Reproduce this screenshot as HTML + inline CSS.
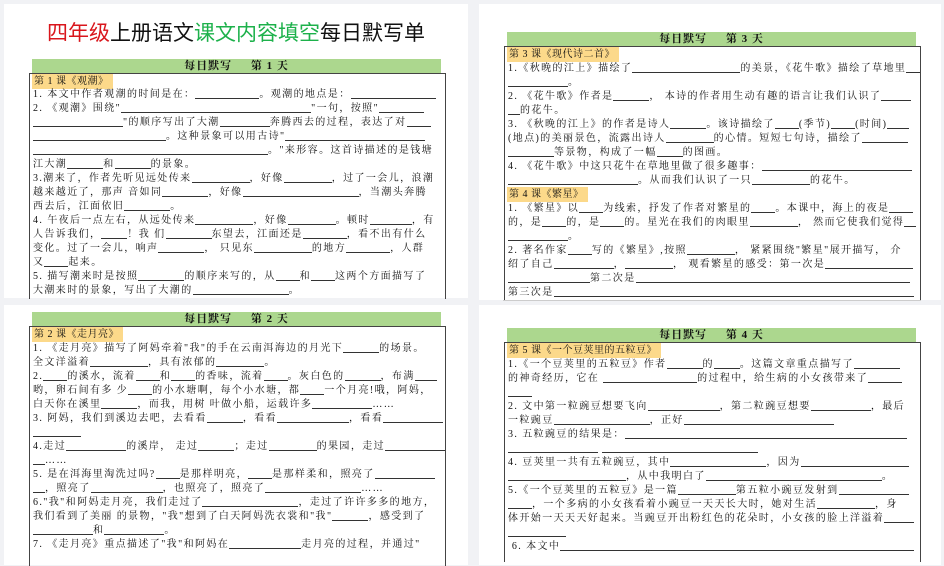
<!DOCTYPE html>
<html><head><meta charset="utf-8"><style>
*{margin:0;padding:0;box-sizing:border-box}
body{width:944px;height:557px;background:#f1f2f5;position:relative;overflow:hidden;font-family:"Liberation Serif","Noto Serif CJK SC","Noto Sans CJK SC",serif;color:#111}
.pg{position:absolute;background:#fff}
.hd{position:absolute;height:14px;background:#acd78e;font-size:11px;line-height:14px;text-align:center;font-weight:bold;letter-spacing:1px}
.bx{position:absolute;border:1px solid #444;border-bottom:none;overflow:hidden}
.ln{position:absolute;left:3px;white-space:nowrap;font-size:10px;line-height:14px;height:14px;letter-spacing:1.4px}
.tag{background:#fcd98a;padding:0 4px 0 2px;display:inline-block;line-height:15px;letter-spacing:0.5px}
.u{display:inline-block;border-bottom:1px solid #333;height:11px;vertical-align:-2px}
.t{position:absolute;left:0;width:472px;top:21px;text-align:center;font-family:"Liberation Sans","Noto Sans CJK SC",sans-serif;font-size:21px;line-height:26px;letter-spacing:0}
</style></head><body>
<div class="pg" style="left:4px;top:4px;width:464px;height:294px"></div>
<div class="pg" style="left:479px;top:4px;width:462px;height:296px"></div>
<div class="pg" style="left:4px;top:305px;width:464px;height:260px"></div>
<div class="pg" style="left:479px;top:305px;width:462px;height:260px"></div>
<div style="position:absolute;left:503px;top:300px;width:418px;height:1px;background:#ccc"></div>

<div class="t"><span style="color:#d9161c">四年级</span>上册语文<span style="color:#1db14b">课文内容填空</span>每日默写单</div>

<!-- Day 1 -->
<div class="hd" style="left:32px;top:59px;width:409px">每日默写&nbsp;&nbsp;&nbsp;&nbsp;&nbsp;第 1 天</div>
<div class="bx" style="left:29px;top:73px;width:417px;height:226px">
<div class="ln" style="top:0;left:2px"><span class="tag">第 1 课《观潮》</span></div>
<div class="ln" style="top:14px">1. 本文中作者观潮的时间是在：<span class="u" style="width:64px"></span>。观潮的地点是：<span class="u" style="width:85px"></span></div>
<div class="ln" style="top:28px">2. 《观潮》围绕"<span class="u" style="width:190px"></span>"一句，按照"<span class="u" style="width:45px"></span></div>
<div class="ln" style="top:42px"><span class="u" style="width:90px"></span>"的顺序写出了大潮<span class="u" style="width:50px"></span>奔腾西去的过程，表达了对<span class="u" style="width:24px"></span></div>
<div class="ln" style="top:56px"><span class="u" style="width:133px"></span>。这种景象可以用古诗"<span class="u" style="width:140px"></span></div>
<div class="ln" style="top:70px"><span class="u" style="width:235px"></span>。"来形容。这首诗描述的是钱塘</div>
<div class="ln" style="top:84px">江大潮<span class="u" style="width:36px"></span>和<span class="u" style="width:36px"></span>的景象。</div>
<div class="ln" style="top:98px">3.潮来了，作者先听见远处传来<span class="u" style="width:58px"></span>，好像<span class="u" style="width:48px"></span>，过了一会儿，浪潮</div>
<div class="ln" style="top:112px">越来越近了，那声 音如同<span class="u" style="width:46px"></span>，好像<span class="u" style="width:116px"></span>，当潮头奔腾</div>
<div class="ln" style="top:126px">西去后，江面依旧<span class="u" style="width:46px"></span>。</div>
<div class="ln" style="top:140px">4. 午夜后一点左右，从远处传来<span class="u" style="width:58px"></span>，好像<span class="u" style="width:48px"></span>。顿时<span class="u" style="width:42px"></span>，有</div>
<div class="ln" style="top:154px">人告诉我们，<span class="u" style="width:26px"></span>！我 们<span class="u" style="width:46px"></span>东望去，江面还是<span class="u" style="width:44px"></span>，看不出有什么</div>
<div class="ln" style="top:168px">变化。过了一会儿，响声<span class="u" style="width:46px"></span>， 只见东<span class="u" style="width:58px"></span>的地方<span class="u" style="width:44px"></span>，人群</div>
<div class="ln" style="top:182px">又<span class="u" style="width:24px"></span>起来。</div>
<div class="ln" style="top:196px">5. 描写潮来时是按照<span class="u" style="width:46px"></span>的顺序来写的，从<span class="u" style="width:24px"></span>和<span class="u" style="width:24px"></span>这两个方面描写了</div>
<div class="ln" style="top:210px">大潮来时的景象，写出了大潮的<span class="u" style="width:96px"></span>。</div>
</div>

<!-- Day 3 -->
<div class="hd" style="left:507px;top:32px;width:409px">每日默写&nbsp;&nbsp;&nbsp;&nbsp;&nbsp;第 3 天</div>
<div class="bx" style="left:504px;top:46px;width:417px;height:254px">
<div class="ln" style="top:0;left:2px"><span class="tag">第 3 课《现代诗二首》</span></div>
<div class="ln" style="top:15px">1.《秋晚的江上》描绘了<span class="u" style="width:108px"></span>的美景，《花牛歌》描绘了草地里<span class="u" style="width:24px"></span></div>
<div class="ln" style="top:29px"><span class="u" style="width:60px"></span>。</div>
<div class="ln" style="top:43px">2. 《花牛歌》作者是<span class="u" style="width:36px"></span>， 本诗的作者用生动有趣的语言让我们认识了<span class="u" style="width:30px"></span></div>
<div class="ln" style="top:57px"><span class="u" style="width:12px"></span>的花牛。</div>
<div class="ln" style="top:71px">3. 《秋晚的江上》的作者是诗人<span class="u" style="width:36px"></span>。该诗描绘了<span class="u" style="width:24px"></span>(季节)<span class="u" style="width:24px"></span>(时间)<span class="u" style="width:22px"></span></div>
<div class="ln" style="top:85px">(地点)的美丽景色，流露出诗人<span class="u" style="width:48px"></span>的心情。短短七句诗，描绘了<span class="u" style="width:46px"></span></div>
<div class="ln" style="top:99px"><span class="u" style="width:46px"></span>等景物，构成了一幅<span class="u" style="width:26px"></span>的图画。</div>
<div class="ln" style="top:113px">4. 《花牛歌》中这只花牛在草地里做了很多趣事：<span class="u" style="width:150px"></span></div>
<div class="ln" style="top:127px"><span class="u" style="width:130px"></span>。从而我们认识了一只<span class="u" style="width:58px"></span>的花牛。</div>
<div class="ln" style="top:140px;left:2px"><span class="tag">第 4 课《繁星》</span></div>
<div class="ln" style="top:155px">1. 《繁星》以<span class="u" style="width:24px"></span>为线索，抒发了作者对繁星的<span class="u" style="width:24px"></span>。本课中，海上的夜是<span class="u" style="width:24px"></span></div>
<div class="ln" style="top:169px">的，是<span class="u" style="width:24px"></span>的，是<span class="u" style="width:24px"></span>的。星光在我们的肉眼里<span class="u" style="width:48px"></span>， 然而它使我们觉得<span class="u" style="width:12px"></span></div>
<div class="ln" style="top:183px"><span class="u" style="width:60px"></span>。</div>
<div class="ln" style="top:197px">2. 著名作家<span class="u" style="width:24px"></span>写的《繁星》,按照<span class="u" style="width:48px"></span>， 紧紧围绕"繁星"展开描写， 介</div>
<div class="ln" style="top:211px">绍了自己<span class="u" style="width:60px"></span>，<span class="u" style="width:48px"></span>， 观看繁星的感受：第一次是<span class="u" style="width:88px"></span></div>
<div class="ln" style="top:225px"><span class="u" style="width:82px"></span>第二次是<span class="u" style="width:274px"></span></div>
<div class="ln" style="top:239px">第三次是<span class="u" style="width:360px"></span></div>
</div>

<!-- Day 2 -->
<div class="hd" style="left:32px;top:312px;width:409px">每日默写&nbsp;&nbsp;&nbsp;&nbsp;&nbsp;第 2 天</div>
<div class="bx" style="left:29px;top:326px;width:417px;height:240px">
<div class="ln" style="top:0;left:2px"><span class="tag">第 2 课《走月亮》</span></div>
<div class="ln" style="top:15px">1. 《走月亮》描写了阿妈牵着"我"的手在云南洱海边的月光下<span class="u" style="width:36px"></span>的场景。</div>
<div class="ln" style="top:29px">全文洋溢着<span class="u" style="width:58px"></span>，具有浓郁的<span class="u" style="width:48px"></span>。</div>
<div class="ln" style="top:43px">2.<span class="u" style="width:24px"></span>的溪水，流着<span class="u" style="width:24px"></span>和<span class="u" style="width:24px"></span>的香味，流着<span class="u" style="width:24px"></span>。灰白色的<span class="u" style="width:36px"></span>，布满<span class="u" style="width:22px"></span></div>
<div class="ln" style="top:57px">哟，卵石间有多 少<span class="u" style="width:24px"></span>的小水塘啊，每个小水塘，都<span class="u" style="width:24px"></span>一个月亮!哦，阿妈，</div>
<div class="ln" style="top:71px">白天你在溪里<span class="u" style="width:36px"></span>，而我，用树 叶做小船，运载许多<span class="u" style="width:60px"></span>……</div>
<div class="ln" style="top:85px">3. 阿妈，我们到溪边去吧，去看看<span class="u" style="width:36px"></span>，看看<span class="u" style="width:72px"></span>，看看<span class="u" style="width:60px"></span></div>
<div class="ln" style="top:99px"><span class="u" style="width:48px"></span></div>
<div class="ln" style="top:113px">4.走过<span class="u" style="width:60px"></span>的溪岸， 走过<span class="u" style="width:36px"></span>；走过<span class="u" style="width:48px"></span>的果园，走过<span class="u" style="width:60px"></span></div>
<div class="ln" style="top:127px"><span class="u" style="width:12px"></span>……</div>
<div class="ln" style="top:141px">5. 是在洱海里淘洗过吗?<span class="u" style="width:24px"></span>是那样明亮，<span class="u" style="width:24px"></span>是那样柔和，照亮了<span class="u" style="width:60px"></span></div>
<div class="ln" style="top:155px"><span class="u" style="width:12px"></span>，照亮了<span class="u" style="width:72px"></span>，也照亮了，照亮了<span class="u" style="width:96px"></span>……</div>
<div class="ln" style="top:169px">6."我"和阿妈走月亮，我们走过了<span class="u" style="width:96px"></span>，走过了许许多多的地方，</div>
<div class="ln" style="top:183px">我们看到了美丽 的景物，"我"想到了白天阿妈洗衣裳和"我"<span class="u" style="width:36px"></span>，感受到了</div>
<div class="ln" style="top:197px"><span class="u" style="width:60px"></span>和<span class="u" style="width:60px"></span>。</div>
<div class="ln" style="top:211px">7. 《走月亮》重点描述了"我"和阿妈在<span class="u" style="width:72px"></span>走月亮的过程，并通过"</div>
</div>

<!-- Day 4 -->
<div class="hd" style="left:507px;top:328px;width:409px">每日默写&nbsp;&nbsp;&nbsp;&nbsp;&nbsp;第 4 天</div>
<div class="bx" style="left:504px;top:342px;width:417px;height:220px">
<div class="ln" style="top:0;left:2px"><span class="tag">第 5 课《一个豆荚里的五粒豆》</span></div>
<div class="ln" style="top:15px">1.《一个豆荚里的五粒豆》作者<span class="u" style="width:36px"></span>的<span class="u" style="width:26px"></span>。这篇文章重点描写了<span class="u" style="width:46px"></span></div>
<div class="ln" style="top:29px">的神奇经历，它在 <span class="u" style="width:94px"></span>的过程中，给生病的小女孩带来了<span class="u" style="width:34px"></span></div>
<div class="ln" style="top:43px"><span class="u" style="width:24px"></span></div>
<div class="ln" style="top:57px">2. 文中第一粒豌豆想要飞向<span class="u" style="width:72px"></span>，第二粒豌豆想要<span class="u" style="width:60px"></span>，最后</div>
<div class="ln" style="top:71px">一粒豌豆<span class="u" style="width:96px"></span>，正好<span class="u" style="width:150px"></span></div>
<div class="ln" style="top:85px">3. 五粒豌豆的结果是：<span class="u" style="width:282px"></span></div>
<div class="ln" style="top:99px"><span class="u" style="width:90px"></span> <span class="u" style="width:156px"></span></div>
<div class="ln" style="top:113px">4. 豆荚里一共有五粒豌豆，其中<span class="u" style="width:96px"></span>，因为<span class="u" style="width:108px"></span></div>
<div class="ln" style="top:127px"><span class="u" style="width:118px"></span>，从中我明白了<span class="u" style="width:176px"></span>。</div>
<div class="ln" style="top:141px">5.《一个豆荚里的五粒豆》是一篇<span class="u" style="width:58px"></span>第五粒小豌豆发射到<span class="u" style="width:70px"></span></div>
<div class="ln" style="top:155px"><span class="u" style="width:24px"></span>，一个多病的小女孩看着小豌豆一天天长大时，她对生活<span class="u" style="width:58px"></span>，身</div>
<div class="ln" style="top:169px">体开始一天天天好起来。当豌豆开出粉红色的花朵时，小女孩的脸上洋溢着<span class="u" style="width:30px"></span></div>
<div class="ln" style="top:183px"><span class="u" style="width:58px"></span></div>
<div class="ln" style="top:197px">&nbsp;6. 本文中<span class="u" style="width:354px"></span></div>
</div>
</body></html>
